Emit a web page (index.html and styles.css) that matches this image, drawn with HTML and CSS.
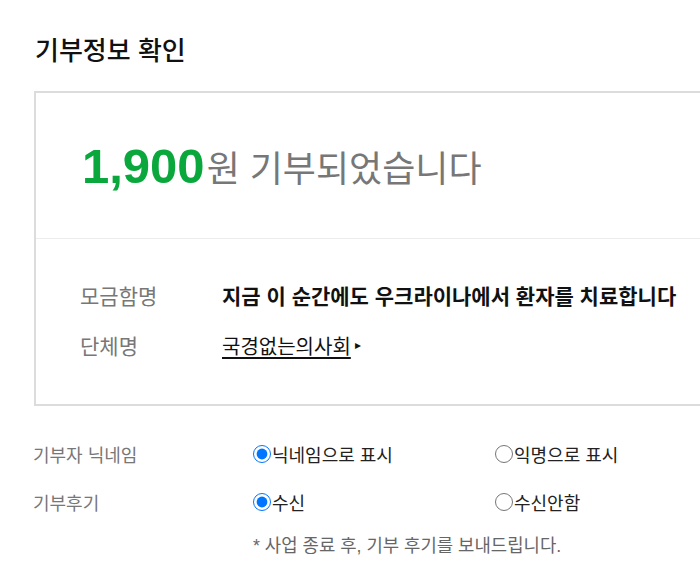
FILE: index.html
```html
<!DOCTYPE html>
<html lang="ko">
<head>
<meta charset="utf-8">
<title>기부정보 확인</title>
<link rel="stylesheet" href="styles.css">
</head>
<body>
<main class="page">
  <h2 class="title">기부정보 확인</h2>
  <section class="box">
    <div class="amount"><strong class="num">1,900</strong><span class="unit">원 기부되었습니다</span></div>
    <dl class="info">
      <div class="row">
        <dt>모금함명</dt>
        <dd class="strong">지금 이 순간에도 우크라이나에서 환자를 치료합니다</dd>
      </div>
      <div class="row">
        <dt>단체명</dt>
        <dd><a class="org" href="#">국경없는의사회</a><span class="arrow">▸</span></dd>
      </div>
    </dl>
  </section>
  <div class="options">
    <div class="opt-label">기부자 닉네임</div>
    <label class="opt"><input type="radio" name="nick" checked>닉네임으로 표시</label>
    <label class="opt"><input type="radio" name="nick">익명으로 표시</label>
    <div class="opt-label">기부후기</div>
    <label class="opt"><input type="radio" name="review" checked>수신</label>
    <label class="opt"><input type="radio" name="review">수신안함</label>
    <div class="opt-label"></div>
    <p class="note">* 사업 종료 후, 기부 후기를 보내드립니다.</p>
  </div>
</main>
</body>
</html>
```

FILE: styles.css
```css
html, body {
  margin: 0;
  padding: 0;
  overflow: hidden;
  background: #fff;
}
body {
  font-family: "Liberation Sans", "Noto Sans CJK KR", sans-serif;
  color: #111;
}
.page {
  width: 700px;
  overflow: hidden;
}
.title {
  margin: 0;
  padding: 31px 0 0 35px;
  font-size: 26px;
  line-height: 40px;
  font-weight: 500;
  color: #111;
}
.box {
  margin: 20px -60px 0 34px;
  border: 2px solid #dcdcdc;
  background: #fff;
}
.amount {
  height: 145px;
  display: flex;
  align-items: center;
  padding-left: 46px;
  border-bottom: 1px solid #ececec;
}
.num {
  font-size: 49px;
  font-weight: bold;
  color: #0aa83c;
}
.unit {
  font-size: 36px;
  color: #777;
  margin-left: 2px;
}
.info {
  margin: 0;
  padding: 31px 0 34px 44px;
}
.row {
  display: flex;
  align-items: center;
  height: 50px;
}
.row dt {
  width: 142px;
  font-size: 21px;
  color: #777;
}
.row dd {
  margin: 0;
  font-size: 20px;
  color: #111;
  display: flex;
  align-items: center;
}
.row dd.strong {
  font-weight: bold;
  font-size: 21px;
}
.org {
  color: #111;
  text-decoration: underline;
  text-underline-offset: 3px;
}
.arrow {
  font-size: 12px;
  margin-left: 4px;
  color: #111;
}
.options {
  margin-top: 24px;
  padding-left: 33px;
  display: grid;
  grid-template-columns: 220px 242px 1fr;
  grid-auto-rows: 48px;
  align-items: center;
}
.opt-label {
  font-size: 18px;
  color: #777;
}
.opt {
  display: flex;
  align-items: center;
  font-size: 18px;
  color: #222;
}
.opt input {
  width: 18px;
  height: 18px;
  margin: 0 1px 0 0;
}
.note {
  grid-column: 2 / 4;
  margin: 0;
  font-size: 17.8px;
  color: #666;
  align-self: start;
  line-height: 24px;
  margin-top: 8px;
}
```
